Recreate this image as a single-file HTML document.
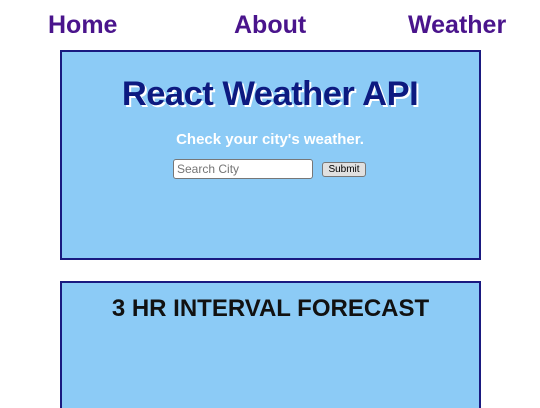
<!DOCTYPE html>
<html><head><style>
html,body{margin:0;width:540px;height:408px;overflow:hidden}
body{background:#fff;font-family:"Liberation Sans",sans-serif;position:relative}
.nav{position:absolute;top:11px;font-size:25px;font-weight:bold;color:#4a148c}
.box{position:absolute;left:60px;width:417px;background:#8ccbf6;border:2px solid #1a1a80}
h1{position:absolute;left:0;right:0;top:75px;margin:0;text-align:center;font-size:34.5px;color:#0d1a80;text-shadow:2px 2px 0 #fff;letter-spacing:-0.5px}
.sub{position:absolute;left:0;right:0;top:131px;text-align:center;font-size:15px;font-weight:bold;color:#fff}
input{position:absolute;left:173px;top:159px;width:140px;height:20px;box-sizing:border-box;border:1px solid #777;border-radius:3px;font-size:12px;padding:0 3px;font-family:"Liberation Sans",sans-serif}
button{position:absolute;left:322px;top:162px;width:44px;height:15px;box-sizing:border-box;border:1px solid #777;border-radius:3px;background:#e0e0e0;font-size:10px;padding:0;font-family:"Liberation Sans",sans-serif}
h2{position:absolute;left:60px;width:421px;top:295px;margin:0;text-align:center;font-size:24px;color:#111}
</style></head><body>
<div class="nav" style="left:48px">Home</div>
<div class="nav" style="left:234px">About</div>
<div class="nav" style="left:408px">Weather</div>
<div class="box" style="top:50px;height:206px"></div>
<h1>React Weather API</h1>
<div class="sub">Check your city's weather.</div>
<input placeholder="Search City">
<button>Submit</button>
<div class="box" style="top:281px;height:140px"></div>
<h2>3 HR INTERVAL FORECAST</h2>
</body></html>
